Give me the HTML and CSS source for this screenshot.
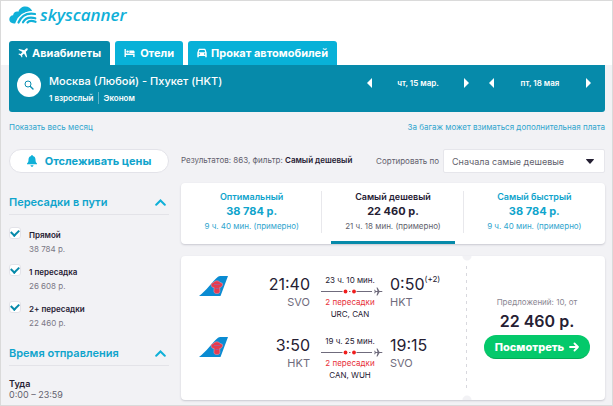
FILE: index.html
```html
<!DOCTYPE html>
<html lang="ru">
<head>
    <meta charset="UTF-8">
    <meta name="viewport" content="width=device-width, initial-scale=1.0">
    <title>Skyscanner</title>
    <link rel="stylesheet" href="styles.css">
</head>
<body>
    <header class="header">
        <a class="logo" href="#">
            <svg width="28" height="19" viewBox="0 0 28 19">
                <path fill="#0fb0d8" d="M5 17.500C2 17.500.3 15.600.3 13.300c0-2.200 1.700-3.900 3.800-4C4.300 7 6 5.500 8.200 5.500c.4 0 .8 0 1.200.2C10.300 2.500 13.200.5 16.300.5c3.100 0 5.800 1.800 6.900 4.600C15.500 5.500 9.500 10.500 7.500 16.500c-.4.700-1.300 1-2.500 1z"/>
                <g fill="none" stroke-linecap="round">
                    <path stroke="#fff" stroke-width="4" d="M8.500 17C11 10.500 16.500 6.300 25.500 7.300M13 17c2-4.500 6.500-6.800 13-5"/>
                    <path stroke="#0fb0d8" stroke-width="2.200" d="M9.500 16.500C12 10.500 17.500 6.500 26 8M14 16.300c2.200-4 6.300-5.500 12.300-4M18.500 16.500c1.500-1.800 4.500-2 8-.7"/>
                </g>
            </svg>
            <span>skyscanner</span>
        </a>
        <nav class="tabs">
            <a class="tab active" href="#">
                <svg width="10" height="10" viewBox="0 0 10 10"><path fill="#fff" d="M9.500.5c-.5-.5-1.300-.2-1.900.4L6.300 2.200 1.200.9.400 1.700 4.500 4 2.700 5.900 1 5.600l-.6.600 2.200 1.200 1.200 2.200.6-.6-.3-1.700L6 5.500l2.300 4.100.8-.8-1.300-5.100 1.300-1.300c.6-.6.900-1.400.4-1.900z"/></svg>
                Авиабилеты
            </a>
            <a class="tab" href="#">
                <svg width="12" height="10" viewBox="0 0 12 10"><path fill="#fff" d="M.5 1h1.400v4.500h8.700V9H9.200V7H1.900v2H.5z"/><circle cx="3.600" cy="3.600" r="1.200" fill="#fff"/><path fill="#fff" d="M5.300 2.500h3.800c1 0 1.500.6 1.500 1.500v1H5.300z"/></svg>
                Отели
            </a>
            <a class="tab" href="#">
                <svg width="10" height="10" viewBox="0 0 10 10"><path fill="#fff" fill-rule="evenodd" d="M2.200.8h5.600c.4 0 .6.200.8.600L9.700 4.700V9.200H8.200V8H1.800v1.200H.3V4.700l1.100-3.300c.2-.4.4-.6.800-.6zM2.500 2l-.7 2.200h6.400L7.500 2zM2.400 5.300a.7.700 0 1 0 0 1.400.7.700 0 0 0 0-1.400zm5.200 0a.7.700 0 1 0 0 1.400.7.700 0 0 0 0-1.400z"/></svg>
                Прокат автомобилей
            </a>
        </nav>
    </header>

    <div class="container">
        <section class="search">
            <button class="search-btn" aria-label="Изменить поиск">
                <svg width="10" height="10" viewBox="0 0 10 10" fill="none" stroke="#0a8eb0"><circle cx="4" cy="4" r="3"/><path stroke-width="1.400" stroke-linecap="round" d="M6.400 6.400 9 9"/></svg>
            </button>
            <div class="route">
                <h1>Москва (Любой) - Пхукет (HKT)</h1>
                <p><span>1 взрослый</span><span>Эконом</span></p>
            </div>
            <div class="dates">
                <div class="date">
                    <button aria-label="Предыдущий день"><svg width="5" height="10" viewBox="0 0 5 10"><path fill="#fff" d="M5 0v10L0 5z"/></svg></button>
                    <span>чт, 15 мар.</span>
                    <button aria-label="Следующий день"><svg width="5" height="10" viewBox="0 0 5 10"><path fill="#fff" d="M0 0v10l5-5z"/></svg></button>
                </div>
                <div class="date">
                    <button aria-label="Предыдущий день"><svg width="5" height="10" viewBox="0 0 5 10"><path fill="#fff" d="M5 0v10L0 5z"/></svg></button>
                    <span>пт, 18 мая</span>
                    <button aria-label="Следующий день"><svg width="5" height="10" viewBox="0 0 5 10"><path fill="#fff" d="M0 0v10l5-5z"/></svg></button>
                </div>
            </div>
        </section>

        <div class="links">
            <a href="#">Показать весь месяц</a>
            <a href="#">За багаж может взиматься дополнительная плата</a>
        </div>

        <div class="content">
            <aside class="sidebar">
                <button class="track">
                    <svg width="10" height="12" viewBox="0 0 10 12"><path fill="#0fb0d8" d="M5 0c.6 0 .9.400.9.900C7.700 1.300 8.500 2.800 8.500 4.500c0 2.200.4 3.200 1.500 4v.8H0v-.8c1.100-.8 1.500-1.800 1.500-4 0-1.700.8-3.200 2.600-3.600C4.100.4 4.400 0 5 0zM3.500 10.300h3c0 .9-.7 1.500-1.500 1.500s-1.500-.6-1.500-1.500z"/></svg>
                    Отслеживать цены
                </button>

                <h2 class="filter-title">Пересадки в пути
                    <svg width="11" height="7" viewBox="0 0 11 7" fill="none" stroke="#0fb0d8" stroke-width="2" stroke-linecap="round"><path d="m1.200 5.800 4.300-4.300 4.300 4.300"/></svg>
                </h2>
                <div class="checks">
                    <label class="check">
                        <input type="checkbox" checked>
                        <span class="check-text"><b>Прямой</b><span>38 784 р.</span></span>
                    </label>
                    <label class="check">
                        <input type="checkbox" checked>
                        <span class="check-text"><b>1 пересадка</b><span>26 608 р.</span></span>
                    </label>
                    <label class="check">
                        <input type="checkbox" checked>
                        <span class="check-text"><b>2+ пересадки</b><span>22 460 р.</span></span>
                    </label>
                </div>

                <h2 class="filter-title">Время отправления
                    <svg width="11" height="7" viewBox="0 0 11 7" fill="none" stroke="#0fb0d8" stroke-width="2" stroke-linecap="round"><path d="m1.200 5.800 4.300-4.300 4.300 4.300"/></svg>
                </h2>
                <div class="depart">
                    <b>Туда</b>
                    <span>0:00 – 23:59</span>
                </div>
            </aside>

            <main class="results">
                <div class="toolbar">
                    <p class="count">Результатов: 863, фильтр: <b>Самый дешевый</b></p>
                    <label for="sort">Сортировать по</label>
                    <div class="select">
                        <select id="sort">
                            <option>Сначала самые дешевые</option>
                        </select>
                        <svg width="8" height="5" viewBox="0 0 8 5"><path fill="#252033" d="M.5 0h7c.5 0 .6.500.3.800L4.500 4.600c-.3.300-.7.300-1 0L.2.800C-.1.500 0 0 .5 0z"/></svg>
                    </div>
                </div>

                <div class="card sorts">
                    <a class="sort" href="#"><b>Оптимальный</b><strong>38 784 р.</strong><span>9 ч. 40 мин. (примерно)</span></a>
                    <a class="sort selected" href="#"><b>Самый дешевый</b><strong>22 460 р.</strong><span>21 ч. 18 мин. (примерно)</span></a>
                    <a class="sort" href="#"><b>Самый быстрый</b><strong>38 784 р.</strong><span>9 ч. 40 мин. (примерно)</span></a>
                </div>

                <article class="card ticket">
                    <div class="legs">
                        <div class="leg">
                            <svg class="airline" width="29" height="20" viewBox="0 0 29 20"><path fill="#0a8bd2" d="M0 20C8 14 12 7 19 .8c.7-.6 1.400-.8 2.300-.8H29l-7.500 20z"/><path fill="#e63b4f" stroke="#f0a4b2" stroke-width=".5" d="M14.500 6.500c1.500-2.200 5.200-2.200 6.700 0l2 .7c.8 1.200.2 3-1.200 4l-1.300.3.200 4.200c-.4 1.300-1.300 1.800-3 1.800s-2.600-.5-3-1.800l.2-4.200-1.800-.3c-1.200-1-1.600-2.800-.6-4z"/><path fill="none" stroke="#8c6ab0" stroke-width=".7" d="M15 8.500h6M16.500 12.500h3"/></svg>
                            <div class="point from"><span class="time">21:40</span><span class="code">SVO</span></div>
                            <div class="stops">
                                <span>23 ч. 10 мин.</span>
                                <svg width="62" height="9" viewBox="0 0 62 9"><path stroke="#6f6b7c" d="M0 4.500h51"/><path stroke="#fff" stroke-width="3" d="M21.500 4.500h14"/><path stroke="#6f6b7c" d="M28 4.500h1.500"/><g fill="#f01d1d"><circle cx="24.500" cy="4.500" r="1.900"/><circle cx="33" cy="4.500" r="1.900"/></g><path fill="#6f6b7c" d="M55.500.5h1l2 3.400h2.200c1 0 1 1.200 0 1.200h-2.200l-2 3.400h-1l1-3.400h-1.700l-.8 1.200h-.8l.5-1.800-.5-1.800h.8l.8 1.200h1.700z"/></svg>
                                <span class="red">2 пересадки</span>
                                <span>URC, CAN</span>
                            </div>
                            <div class="point"><span class="time">0:50<sup>(+2)</sup></span><span class="code">HKT</span></div>
                        </div>
                        <div class="leg">
                            <svg class="airline" width="29" height="20" viewBox="0 0 29 20"><path fill="#0a8bd2" d="M0 20C8 14 12 7 19 .8c.7-.6 1.400-.8 2.300-.8H29l-7.500 20z"/><path fill="#e63b4f" stroke="#f0a4b2" stroke-width=".5" d="M14.500 6.500c1.500-2.200 5.200-2.200 6.700 0l2 .7c.8 1.200.2 3-1.200 4l-1.300.3.200 4.200c-.4 1.300-1.300 1.800-3 1.800s-2.600-.5-3-1.800l.2-4.200-1.800-.3c-1.200-1-1.600-2.800-.6-4z"/><path fill="none" stroke="#8c6ab0" stroke-width=".7" d="M15 8.500h6M16.500 12.500h3"/></svg>
                            <div class="point from"><span class="time">3:50</span><span class="code">HKT</span></div>
                            <div class="stops">
                                <span>19 ч. 25 мин.</span>
                                <svg width="62" height="9" viewBox="0 0 62 9"><path stroke="#6f6b7c" d="M0 4.500h51"/><path stroke="#fff" stroke-width="3" d="M21.500 4.500h14"/><path stroke="#6f6b7c" d="M28 4.500h1.500"/><g fill="#f01d1d"><circle cx="24.500" cy="4.500" r="1.900"/><circle cx="33" cy="4.500" r="1.900"/></g><path fill="#6f6b7c" d="M55.500.5h1l2 3.400h2.200c1 0 1 1.200 0 1.200h-2.200l-2 3.400h-1l1-3.400h-1.700l-.8 1.200h-.8l.5-1.800-.5-1.800h.8l.8 1.200h1.700z"/></svg>
                                <span class="red">2 пересадки</span>
                                <span>CAN, WUH</span>
                            </div>
                            <div class="point"><span class="time">19:15</span><span class="code">SVO</span></div>
                        </div>
                    </div>
                    <div class="offer">
                        <span>Предложений: 10, от</span>
                        <strong>22 460 р.</strong>
                        <button class="go">Посмотреть
                            <svg width="10" height="10" viewBox="0 0 10 10" fill="none" stroke="#fff" stroke-width="1.800" stroke-linecap="round" stroke-linejoin="round"><path d="M1 5h8M5.500 1.500 9 5 5.500 8.500"/></svg>
                        </button>
                    </div>
                </article>
            </main>
        </div>
    </div>
</body>
</html>
```
FILE: styles.css
```css
* {
    box-sizing: border-box;
    margin: 0;
    padding: 0;
}

body {
    min-height: 100vh;
    border: 1px solid #dadada;
    background-color: #f2f2f5;
    font-family: Inter, "Liberation Sans", sans-serif;
    font-size: 9px;
    line-height: 12px;
    color: #252033;
}

a {
    text-decoration: none;
    color: #30a5ce;
}

button, select {
    border: none;
    background: none;
    font-family: inherit;
    cursor: pointer;
}

svg {
    display: block;
    flex-shrink: 0;
}

/* header */
.header {
    background-color: white;
    padding: 4px 8px 0;
}

.logo {
    display: flex;
    align-items: center;
    gap: 3px;
    height: 20px;
    margin-bottom: 16px;
    color: #0fb0d8;
    font-family: "Open Sans", sans-serif;
    font-size: 17px;
    font-style: italic;
    font-weight: 600;
}

.tabs {
    display: flex;
    gap: 5px;
}

.tab {
    display: flex;
    align-items: center;
    gap: 4px;
    height: 24px;
    padding: 0 9px;
    border-radius: 3px 3px 0 0;
    background-color: #08b1d8;
    color: white;
    font-size: 11px;
    font-weight: 700;
}

.tab.active {
    background-color: #068aaa;
}

/* search panel */
.container {
    padding: 0 7px 0 8px;
}

.search {
    display: flex;
    height: 47px;
    padding: 8px 14px 0 8px;
    border-radius: 0 0 3px 3px;
    background-color: #068aaa;
    color: white;
}

.search-btn {
    display: flex;
    align-items: center;
    justify-content: center;
    width: 24px;
    height: 24px;
    border-radius: 50%;
    background-color: white;
}

.route {
    flex: 1;
    margin-left: 8px;
}

.route h1 {
    font-size: 11px;
    font-weight: 500;
    line-height: 17px;
}

.route p {
    display: flex;
    margin-top: 2px;
    font-size: 8px;
    font-weight: 600;
}

.route p span + span {
    margin-left: 4px;
    padding-left: 5px;
    border-left: 1px solid #5fb3c8;
}

.dates {
    display: flex;
    gap: 20px;
    height: 20px;
}

.date {
    display: flex;
    align-items: center;
    justify-content: space-between;
    width: 102px;
    font-size: 8px;
    font-weight: 600;
}

.links {
    display: flex;
    justify-content: space-between;
    padding: 9px 0 16px;
    font-size: 8px;
}

/* filters */
.content {
    display: flex;
    gap: 12px;
}

.sidebar {
    width: 160px;
}

.track {
    display: flex;
    align-items: center;
    justify-content: center;
    gap: 8px;
    width: 100%;
    height: 24px;
    margin-bottom: 17px;
    border: 1px solid #e3e3e9;
    border-radius: 12px;
    background-color: white;
    color: #0fa4cc;
    font-size: 11px;
    font-weight: 700;
}

.filter-title {
    display: flex;
    align-items: center;
    justify-content: space-between;
    height: 25px;
    padding-right: 3px;
    border-bottom: 1px solid #e3e3e8;
    color: #0fa4cc;
    font-size: 11px;
    font-weight: 600;
}

.checks {
    display: flex;
    flex-direction: column;
    gap: 9px;
    padding: 12px 0;
}

.check {
    display: flex;
    gap: 8px;
}

.check input {
    appearance: none;
    display: grid;
    place-items: center;
    flex-shrink: 0;
    width: 12px;
    height: 12px;
    border: 1px solid #e3e3e9;
    border-radius: 3px;
    background-color: white;
}

.check input:checked::after {
    content: "";
    width: 6px;
    height: 4px;
    margin-bottom: 2px;
    border-left: 2px solid #068aaa;
    border-bottom: 2px solid #068aaa;
    transform: rotate(-45deg);
}

.check-text {
    display: flex;
    flex-direction: column;
    gap: 2px;
    padding-top: 2px;
    font-size: 8px;
}

.check-text b {
    font-weight: 600;
}

.check-text span {
    color: #7b7885;
}

.depart {
    display: flex;
    flex-direction: column;
    padding-top: 12px;
    color: #625f6d;
    line-height: 11px;
}

.depart b {
    color: #252033;
    font-weight: 600;
}

/* results */
.results {
    flex: 1;
}

.toolbar {
    display: flex;
    align-items: center;
    font-size: 8px;
    color: #625f6d;
}

.count {
    flex: 1;
    padding-bottom: 3px;
}

.count b {
    color: #252033;
    font-weight: 600;
}

.select {
    display: grid;
    align-items: center;
    width: 162px;
    margin-left: 4px;
}

.select select {
    grid-area: 1 / 1;
    appearance: none;
    width: 100%;
    height: 24px;
    padding-left: 8px;
    border: 1px solid #e6e6eb;
    border-radius: 2px;
    background-color: white;
    color: #625f6d;
    font-size: 9px;
}

.select svg {
    grid-area: 1 / 1;
    justify-self: end;
    margin-right: 11px;
    pointer-events: none;
}

.card {
    border-radius: 4px;
    background-color: white;
    box-shadow: 0 1px 2px #c8c8d0;
}

.sorts {
    display: flex;
    height: 61px;
    margin-top: 10px;
}

.sort {
    flex: 1;
    display: flex;
    flex-direction: column;
    align-items: center;
    padding-top: 8px;
    background: linear-gradient(#e8e8ec, #e8e8ec) right 8px / 1px 42px no-repeat;
    font-size: 8px;
}

.sort:last-child {
    background: none;
}

.sort b {
    color: #0fa4cc;
    font-size: 9px;
    font-weight: 600;
}

.sort strong {
    color: #0fa4cc;
    font-size: 11px;
    font-weight: 700;
    line-height: 17px;
}

.sort.selected {
    color: #625f6d;
}

.sort.selected b,
.sort.selected strong {
    color: #252033;
}

.sort.selected::after {
    content: "";
    width: 124px;
    height: 3px;
    margin-top: auto;
    background-color: #068aaa;
}

.ticket {
    display: flex;
    margin-top: 12px;
    background:
        radial-gradient(circle at 286px 0, #f2f2f5 4px, transparent 5px),
        radial-gradient(circle at 286px 100%, #f2f2f5 4px, transparent 5px),
        white;
}

.legs {
    display: flex;
    flex-direction: column;
    gap: 15px;
    width: 286px;
    padding: 18px 0 19px 18px;
    background: repeating-linear-gradient(#d8d8de 0 3px, transparent 3px 7px) right center / 1px calc(100% - 20px) no-repeat;
}

.leg {
    display: flex;
}

.airline {
    margin-top: 2px;
}

.point {
    display: flex;
    flex-direction: column;
}

.from {
    flex: 0 0 82px;
    align-items: flex-end;
}

.time {
    font-size: 16px;
    line-height: 20px;
    white-space: nowrap;
}

.time sup {
    font-size: 8px;
    line-height: 8px;
    vertical-align: 8px;
}

.code {
    margin-top: 1px;
    color: #6f6b7c;
    font-size: 11px;
    line-height: 14px;
}

.stops {
    display: flex;
    flex-direction: column;
    align-items: center;
    width: 62px;
    margin: 0 7px 0 11px;
    padding-right: 4px;
    font-size: 8px;
    line-height: 12px;
    white-space: nowrap;
}

.stops svg {
    margin: 1px -4px 0 0;
}

.stops .red {
    color: #e8303a;
}

.offer {
    flex: 1;
    display: flex;
    flex-direction: column;
    align-items: center;
    padding: 40px 0 0 2px;
    color: #8a8793;
    font-size: 8px;
}

.offer strong {
    margin: 3px 0 4px;
    color: #252033;
    font-size: 16px;
    font-weight: 600;
    line-height: 20px;
}

.go {
    display: flex;
    align-items: center;
    gap: 5px;
    height: 24px;
    padding: 0 11px;
    border-bottom: 1px solid #03ac55;
    border-radius: 12px;
    background-color: #04c96b;
    color: white;
    font-size: 11px;
    font-weight: 800;
}
```
